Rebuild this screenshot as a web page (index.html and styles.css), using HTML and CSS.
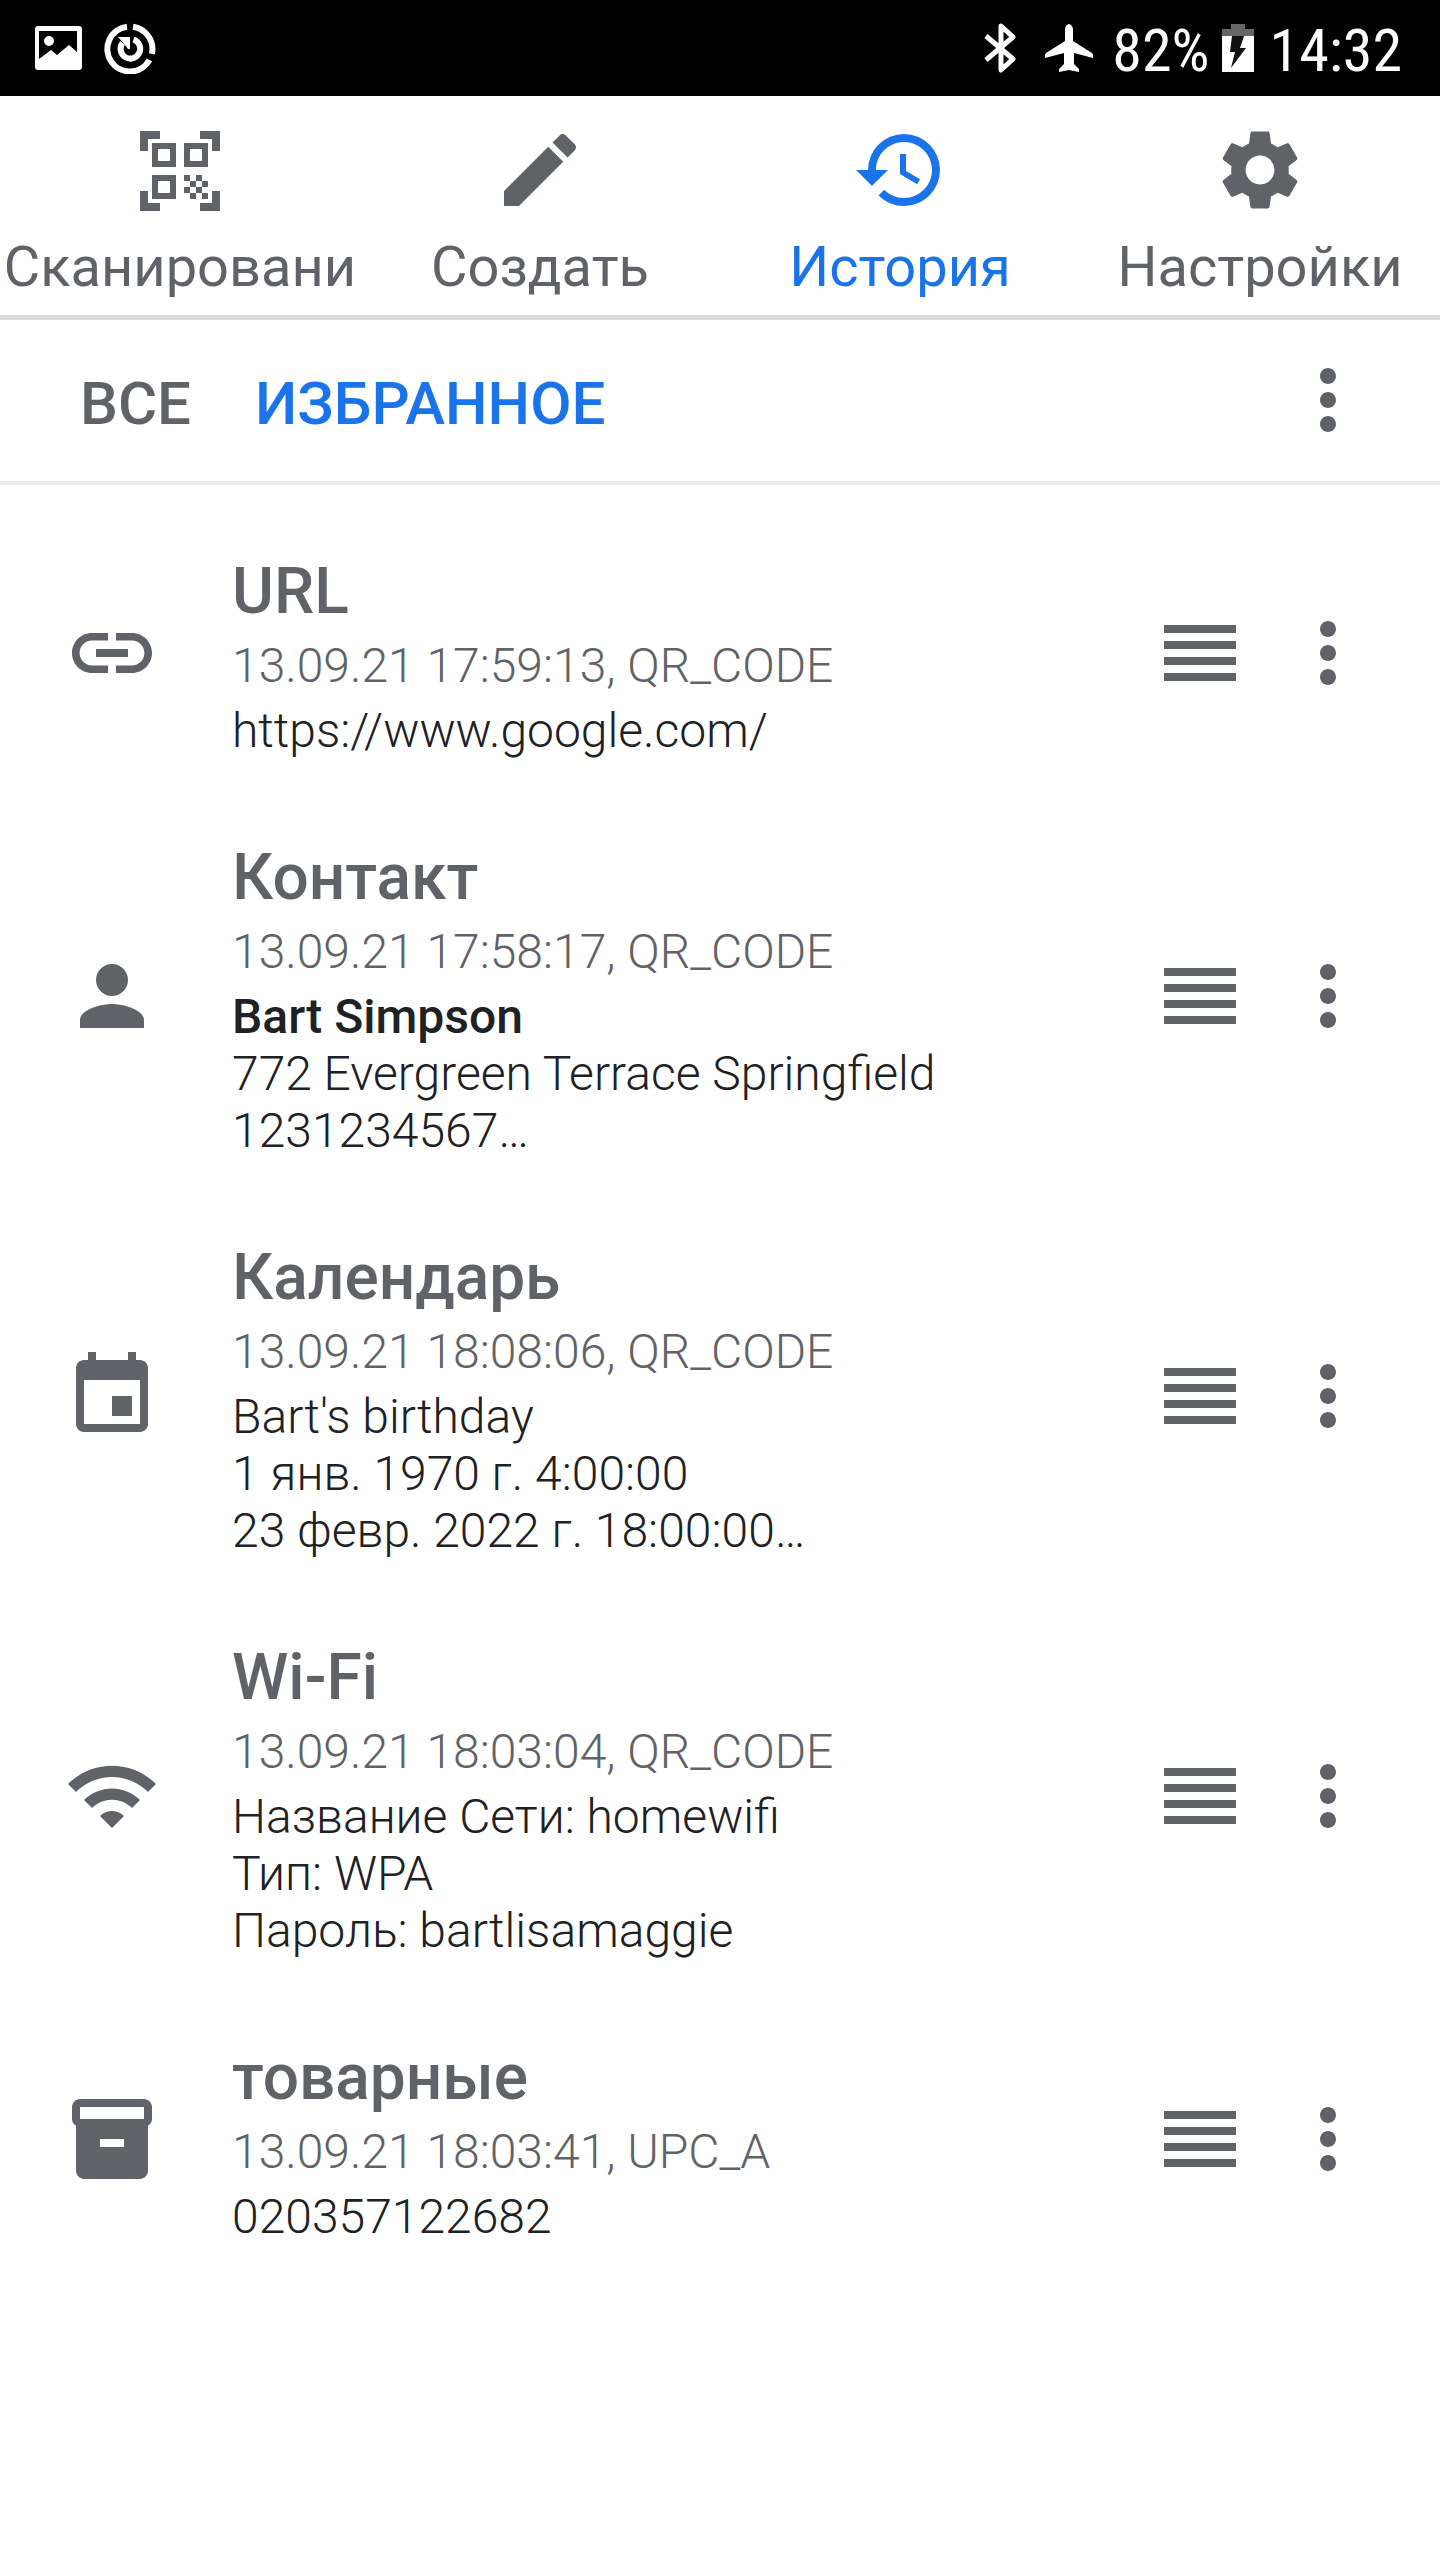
FILE: index.html
```html
<!DOCTYPE html>
<html lang="ru">
<head>
<meta charset="utf-8">
<meta name="viewport" content="width=device-width, initial-scale=1">
<title>История</title>
<link rel="stylesheet" href="styles.css">
</head>
<body>
<svg class="defs" aria-hidden="true">
  <symbol id="more" viewBox="0 0 24 24"><path d="M12 8c1.1 0 2-.9 2-2s-.9-2-2-2-2 .9-2 2 .9 2 2 2zm0 2c-1.1 0-2 .9-2 2s.9 2 2 2 2-.9 2-2-.9-2-2-2zm0 6c-1.1 0-2 .9-2 2s.9 2 2 2 2-.9 2-2-.9-2-2-2z"/></symbol>
  <symbol id="drag" viewBox="0 0 96 96"><path d="M12 20h72v8H12zM12 36h72v8H12zM12 52h72v8H12zM12 68h72v8H12z"/></symbol>
</svg>

<header class="status">
  <div class="status-group status-left">
    <svg class="status-icon" viewBox="0 0 52 52"><path fill-rule="evenodd" d="M6 4h41q3 0 3 3v38q0 3-3 3H6q-3 0-3-3V7q0-3 3-3zM7 9v28l12-9 6 5 12-10 8 7V9z"/><circle cx="17" cy="19" r="5"/></svg>
    <svg class="status-icon" viewBox="0 0 52 52"><g fill="none" stroke="#fff" stroke-width="6"><path d="M29 4.700A22.500 22.500 0 0 1 47.900 31.800M45.500 38A22.500 22.500 0 1 1 23 4.700"/><path d="M29.500 17.500A9.800 9.800 0 1 1 18.500 21"/></g><path d="M14 15h12v12h-2l-3-4z"/></svg>
  </div>
  <div class="status-group status-right">
    <svg class="bluetooth" viewBox="0 0 32 52" fill="none" stroke="#fff" stroke-width="5" stroke-linejoin="round"><path d="M2 14l27 23-12 11V4l12 11L2 38"/></svg>
    <svg class="airplane" viewBox="0 0 50 52"><path d="M25 2q4 1 4 6v11l19 12q2 2 1 5l-19-5v11l5 5v3l-10-2-10 2v-3l5-5V31L1 36q-1-3 1-5l19-12V8q0-5 4-6z"/></svg>
    <span class="status-text">82%</span>
    <svg class="battery" viewBox="0 0 32 52"><path fill="#666" d="M9 2h14v5h9v7H0V7h9z"/><path d="M0 14h32v36H0z"/><path fill="#111" d="M10 14h12l-4 12h6L9 46l4-16H8z"/></svg>
    <time class="status-text">14:32</time>
  </div>
</header>

<nav class="tabs">
  <a class="tab" href="#scan">
    <svg class="icon" viewBox="0 0 96 96"><path fill-rule="evenodd" d="M8 9h20v8H16v12H8zM68 9h20v20h-8V17H68zM8 69h8v12h12v8H8zM80 69h8v20H68v-8h12zM20 21h24v24H20zM26 27v12h12V27zM52 21h24v24H52zM58 27v12h12V27zM20 53h24v24H20zM26 59v12h12V59z"/><path d="M52 53h6v6h-6zM64 53h6v6h-6zM58 59h6v6h-6zM70 59h6v6h-6zM52 65h6v6h-6zM64 65h6v6h-6zM58 71h6v6h-6zM70 71h6v6h-6z"/></svg>
    <span class="tab-label">Сканировани</span>
  </a>
  <a class="tab" href="#create">
    <svg class="icon" viewBox="0 0 24 24"><path d="M3 17.250V21h3.750L17.810 9.940l-3.750-3.750L3 17.250zM20.710 7.040c.39-.39.39-1.020 0-1.410l-2.340-2.340c-.39-.39-1.020-.39-1.410 0l-1.830 1.830 3.750 3.750 1.830-1.830z"/></svg>
    <span class="tab-label">Создать</span>
  </a>
  <a class="tab active" href="#history" aria-current="page">
    <svg class="icon" viewBox="0 0 24 24"><path d="M13 3a9 9 0 0 0-9 9H1l3.890 3.890.07.14L9 12H6c0-3.870 3.130-7 7-7s7 3.130 7 7-3.130 7-7 7c-1.930 0-3.680-.79-4.940-2.060l-1.420 1.420A8.950 8.950 0 0 0 13 21a9 9 0 0 0 0-18zm-1 5v5l4.280 2.540.72-1.210-3.500-2.080V8z"/></svg>
    <span class="tab-label">История</span>
  </a>
  <a class="tab" href="#settings">
    <svg class="icon" viewBox="0 0 24 24"><path d="M19.140 12.940c.04-.3.06-.61.06-.94 0-.32-.02-.64-.07-.94l2.030-1.580c.18-.14.23-.41.12-.61l-1.920-3.320c-.12-.22-.37-.29-.59-.22l-2.390.96c-.5-.38-1.030-.7-1.620-.94l-.36-2.540c-.04-.24-.24-.41-.48-.41h-3.840c-.24 0-.43.17-.47.41l-.36 2.540c-.59.24-1.130.57-1.620.94l-2.390-.96c-.22-.08-.47 0-.59.22L2.740 8.870c-.12.21-.08.47.12.61l2.030 1.580c-.05.3-.09.63-.09.94s.02.64.07.94l-2.030 1.580c-.18.14-.23.41-.12.61l1.920 3.320c.12.22.37.29.59.22l2.390-.96c.5.38 1.030.7 1.620.94l.36 2.540c.05.24.24.41.48.41h3.840c.24 0 .44-.17.47-.41l.36-2.540c.59-.24 1.130-.56 1.620-.94l2.390.96c.22.08.47 0 .59-.22l1.920-3.320c.12-.22.07-.47-.12-.61l-2.010-1.580zM12 15.600c-1.980 0-3.600-1.620-3.600-3.600s1.620-3.600 3.600-3.600 3.600 1.620 3.600 3.600-1.620 3.600-3.600 3.600z"/></svg>
    <span class="tab-label">Настройки</span>
  </a>
</nav>

<div class="filters">
  <button class="filter" type="button">ВСЕ</button>
  <button class="filter active" type="button">ИЗБРАННОЕ</button>
  <button class="icon-button push" type="button" aria-label="Ещё"><svg class="icon"><use href="#more"/></svg></button>
</div>

<main>
  <ul class="list">
    <li class="item">
      <svg class="icon" viewBox="0 0 24 24"><path d="M3.900 12c0-1.710 1.390-3.100 3.100-3.100h4V7H7c-2.760 0-5 2.240-5 5s2.240 5 5 5h4v-1.900H7c-1.710 0-3.100-1.390-3.100-3.100zM8 13h8v-2H8v2zm9-6h-4v1.900h4c1.710 0 3.100 1.390 3.100 3.100s-1.390 3.100-3.100 3.100h-4V17h4c2.760 0 5-2.240 5-5s-2.240-5-5-5z"/></svg>
      <div class="details">
        <h2 class="title">URL</h2>
        <p class="meta">13.09.21 17:59:13, QR_CODE</p>
        <p class="text">https://www.google.com/</p>
      </div>
      <button class="icon-button" type="button" aria-label="Переместить"><svg class="icon"><use href="#drag"/></svg></button>
      <button class="icon-button" type="button" aria-label="Ещё"><svg class="icon"><use href="#more"/></svg></button>
    </li>
    <li class="item">
      <svg class="icon" viewBox="0 0 24 24"><path d="M12 12c2.210 0 4-1.790 4-4s-1.790-4-4-4-4 1.790-4 4 1.790 4 4 4zm0 2c-2.670 0-8 1.340-8 4v2h16v-2c0-2.660-5.330-4-8-4z"/></svg>
      <div class="details">
        <h2 class="title">Контакт</h2>
        <p class="meta">13.09.21 17:58:17, QR_CODE</p>
        <p class="text"><strong class="name">Bart Simpson</strong><br>772 Evergreen Terrace Springfield<br>1231234567…</p>
      </div>
      <button class="icon-button" type="button" aria-label="Переместить"><svg class="icon"><use href="#drag"/></svg></button>
      <button class="icon-button" type="button" aria-label="Ещё"><svg class="icon"><use href="#more"/></svg></button>
    </li>
    <li class="item">
      <svg class="icon" viewBox="0 0 24 24"><path d="M17 12h-5v5h5v-5zM16 1v2H8V1H6v2H5c-1.110 0-1.990.9-1.990 2L3 19a2 2 0 0 0 2 2h14c1.100 0 2-.9 2-2V5c0-1.100-.9-2-2-2h-1V1h-2zm3 18H5V8h14v11z"/></svg>
      <div class="details">
        <h2 class="title">Календарь</h2>
        <p class="meta">13.09.21 18:08:06, QR_CODE</p>
        <p class="text">Bart's birthday<br>1 янв. 1970 г. 4:00:00<br>23 февр. 2022 г. 18:00:00…</p>
      </div>
      <button class="icon-button" type="button" aria-label="Переместить"><svg class="icon"><use href="#drag"/></svg></button>
      <button class="icon-button" type="button" aria-label="Ещё"><svg class="icon"><use href="#more"/></svg></button>
    </li>
    <li class="item">
      <svg class="icon" viewBox="0 0 24 24"><path d="M1 9l2 2c4.970-4.970 13.030-4.970 18 0l2-2C16.930 2.930 7.080 2.930 1 9zm8 8l3 3 3-3c-1.650-1.660-4.340-1.660-6 0zm-4-4l2 2c2.760-2.760 7.240-2.760 10 0l2-2C15.140 9.140 8.870 9.140 5 13z"/></svg>
      <div class="details">
        <h2 class="title">Wi-Fi</h2>
        <p class="meta">13.09.21 18:03:04, QR_CODE</p>
        <p class="text">Название Сети: homewifi<br>Тип: WPA<br>Пароль: bartlisamaggie</p>
      </div>
      <button class="icon-button" type="button" aria-label="Переместить"><svg class="icon"><use href="#drag"/></svg></button>
      <button class="icon-button" type="button" aria-label="Ещё"><svg class="icon"><use href="#more"/></svg></button>
    </li>
    <li class="item">
      <svg class="icon" viewBox="0 0 24 24"><path d="M20 2H4c-1 0-2 .9-2 2v3.010c0 .72.43 1.340 1 1.690V20c0 1.100 1.100 2 2 2h14c.9 0 2-.9 2-2V8.700c.57-.35 1-.97 1-1.690V4c0-1.100-1-2-2-2zm-5 12H9v-2h6v2zm5-7H4V4h16v3z"/></svg>
      <div class="details">
        <h2 class="title">товарные</h2>
        <p class="meta">13.09.21 18:03:41, UPC_A</p>
        <p class="text">020357122682</p>
      </div>
      <button class="icon-button" type="button" aria-label="Переместить"><svg class="icon"><use href="#drag"/></svg></button>
      <button class="icon-button" type="button" aria-label="Ещё"><svg class="icon"><use href="#more"/></svg></button>
    </li>
  </ul>
</main>
</body>
</html>
```
FILE: styles.css
```css
* {
  box-sizing: border-box;
}

body {
  margin: 0;
  background: #fff;
  color: #202124;
  font-family: Roboto, "Liberation Sans", sans-serif;
}

svg {
  display: block;
  flex: none;
  fill: currentColor;
}

.defs {
  display: none;
}

.status {
  display: flex;
  justify-content: space-between;
  height: 96px;
  padding: 0 38px 0 32px;
  background: #000;
  color: #fff;
}

.status-group {
  display: flex;
  align-items: center;
}

.status-left {
  gap: 20px;
}

.status-right {
  font-family: "Roboto Condensed", Roboto, sans-serif;
  font-size: 60px;
  line-height: 70px;
}

.status-text {
  padding-top: 6px;
}

.status-icon {
  width: 52px;
  height: 52px;
}

.bluetooth {
  width: 32px;
  height: 52px;
  margin-right: 28px;
}

.bluetooth path {
  fill: none;
}

.airplane {
  width: 50px;
  height: 52px;
  margin-right: 18px;
}

.battery {
  width: 32px;
  height: 52px;
  margin: 0 16px 0 12px;
}

.icon {
  width: 96px;
  height: 96px;
}

.tabs {
  display: grid;
  grid-template-columns: repeat(4, minmax(0, 1fr));
  border-bottom: 5px solid #dadce0;
}

.tab {
  display: flex;
  flex-direction: column;
  align-items: center;
  gap: 16px;
  padding: 26px 0 15px;
  overflow: hidden;
  color: #5f6368;
  font-size: 56px;
  line-height: 66px;
  text-decoration: none;
}

.filters {
  display: flex;
  align-items: center;
  gap: 64px;
  padding: 32px 64px 33px 80px;
  border-bottom: 4px solid #e8eaed;
}

.filter,
.icon-button {
  border: 0;
  background: none;
  color: #5f6368;
}

.filter {
  padding: 8px 0 0;
  font: 500 60px/70px Roboto, "Liberation Sans", sans-serif;
}

.icon-button {
  flex: none;
  padding: 0;
}

.push {
  margin-left: auto;
}

.tab.active,
.filter.active {
  color: #1a73e8;
}

.list {
  margin: 0;
  padding: 25px 0;
  list-style: none;
}

.item {
  display: flex;
  align-items: center;
  gap: 32px;
  padding: 0 64px;
}

.item > .icon {
  color: #5f6368;
}

.details {
  flex: 1;
  min-width: 0;
  padding: 44px 0 37px 40px;
}

.title {
  margin: 0;
  color: #5f6368;
  font-size: 64px;
  font-weight: 500;
  line-height: 75px;
}

.meta,
.text {
  margin: 0;
  font-size: 48px;
  font-weight: 300;
  line-height: 57px;
}

.meta {
  padding: 8px 0;
  color: #5f6368;
}

.name {
  font-weight: 500;
}
```
